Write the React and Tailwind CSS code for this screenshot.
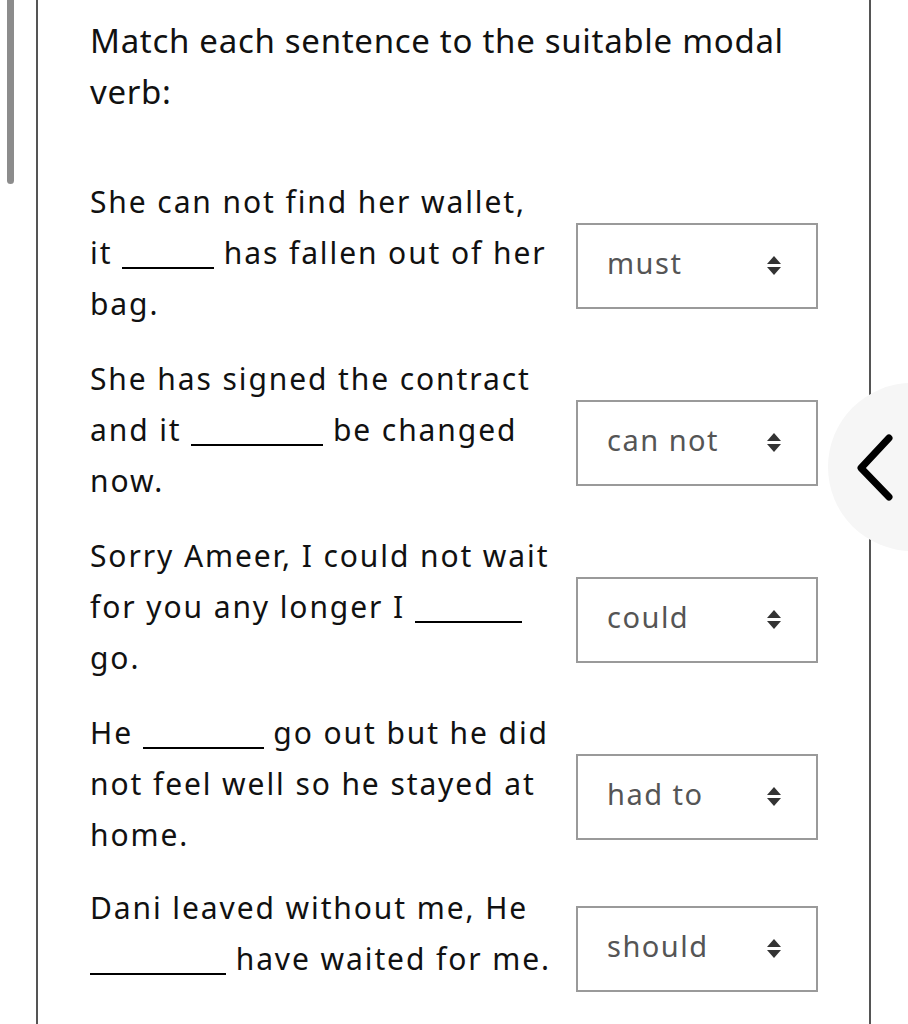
import React from "react";

const Blank = ({ w }) => (
  <span className={`inline-block border-b-[2px] border-black align-[-5px] ${w}`} />
);

const Arrows = () => (
  <svg width="14" height="22" viewBox="0 0 14 22" className="shrink-0">
    <path d="M7 1 L14 9 L0 9 Z" fill="#333" />
    <path d="M0 12 L14 12 L7 20 Z" fill="#333" />
  </svg>
);

const Select = ({ value, mt }) => (
  <div className={`w-[242px] h-[86px] border-2 border-[#9a9a9a] flex items-center pl-[29px] pr-[35px] shrink-0 ${mt}`}>
    <span className="flex-1 text-[29px] tracking-[1.5px] text-[#555] pb-[8px] leading-none">{value}</span>
    <Arrows />
  </div>
);

const Row = ({ children, value, mt = "mt-[47px]" }) => (
  <div className="flex items-start">
    <div className="w-[486px] text-[30px] tracking-[1.9px] leading-[51px] text-[#111]">{children}</div>
    <Select value={value} mt={mt} />
  </div>
);

export default function App() {
  return (
    <div
      className="relative w-[908px] h-[1024px] overflow-hidden bg-white"
      style={{ fontFamily: '"Noto Sans", "Open Sans", sans-serif' }}
    >
      <div className="absolute left-[7px] top-[-10px] w-[7px] h-[194px] rounded-full bg-[#8c8c8c]" />
      <div className="ml-[36px] w-[835px] h-full border-x-2 border-[#555] pl-[52px] pt-[15px]">
        <h1 className="text-[33px] leading-[51px] font-normal text-[#111] w-[740px] tracking-[0.7px]">
          Match each sentence to the suitable modal<br />verb:
        </h1>
        <div className="mt-[59px] flex flex-col gap-[24px]">
          <Row value="must">
            She can not find her wallet,<br />it <Blank w="w-[92px]" /> has fallen out of her<br />bag.
          </Row>
          <Row value="can not">
            She has signed the contract<br />and it <Blank w="w-[132px]" /> be changed<br />now.
          </Row>
          <Row value="could">
            Sorry Ameer, I could not wait<br />for you any longer I <Blank w="w-[107px]" /><br />go.
          </Row>
          <Row value="had to">
            He <Blank w="w-[121px]" /> go out but he did<br />not feel well so he stayed at<br />home.
          </Row>
          <Row value="should" mt="mt-[22px]">
            <span className="relative top-[-2px]">Dani leaved without me, He<br /><Blank w="w-[136px]" /> have waited for me.</span>
          </Row>
        </div>
      </div>
      <div className="absolute left-[828px] top-[383px] w-[168px] h-[168px] rounded-full bg-[#f6f6f6] flex items-center pl-[28px]">
        <svg width="40" height="70" viewBox="0 0 40 70">
          <path d="M33 6 L5 36 L33 65" fill="none" stroke="#000" strokeWidth="7" strokeLinecap="round" strokeLinejoin="round" />
        </svg>
      </div>
    </div>
  );
}
